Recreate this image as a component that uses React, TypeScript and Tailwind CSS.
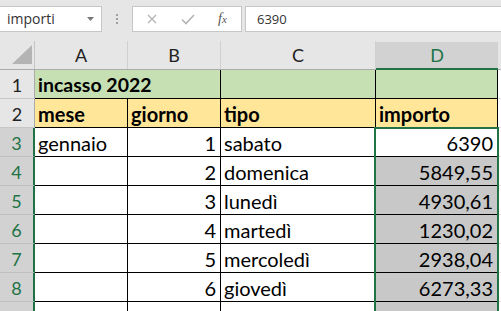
import React from "react";

type Row = { n: number; a?: string; b?: string; c?: string; d?: string; kind: "title" | "head" | "data" };

const rows: Row[] = [
  { n: 1, a: "incasso 2022", kind: "title" },
  { n: 2, a: "mese", b: "giorno", c: "tipo", d: "importo", kind: "head" },
  { n: 3, a: "gennaio", b: "1", c: "sabato", d: "6390", kind: "data" },
  { n: 4, b: "2", c: "domenica", d: "5849,55", kind: "data" },
  { n: 5, b: "3", c: "lunedì", d: "4930,61", kind: "data" },
  { n: 6, b: "4", c: "martedì", d: "1230,02", kind: "data" },
  { n: 7, b: "5", c: "mercoledì", d: "2938,04", kind: "data" },
  { n: 8, b: "6", c: "giovedì", d: "6273,33", kind: "data" },
  { n: 9, b: "7", c: "venerdì", d: "", kind: "data" },
];

const cellFont = { fontFamily: "Lato, 'Open Sans', sans-serif" };

export default function App() {
  return (
    <div className="w-[501px] h-[311px] overflow-hidden bg-white relative" style={{ fontFamily: "'Open Sans', sans-serif" }}>
      {/* toolbar */}
      <div className="h-[41px] bg-[#e6e6e6] flex items-start pt-[6px]">
        <div className="w-[102px] h-[26px] bg-white border border-l-0 border-[#c6c6c6] flex items-center justify-between pl-[7px] pr-[7px]">
          <span className="text-[14px] text-[#333] leading-none">importi</span>
          <svg width="7" height="4" viewBox="0 0 7 4"><path d="M0 0h7L3.5 4z" fill="#777" /></svg>
        </div>
        <div className="w-[30px] h-[26px] flex flex-col items-center justify-center gap-[2px]">
          <span className="w-[2px] h-[2px] bg-[#a0a0a0]" />
          <span className="w-[2px] h-[2px] bg-[#a0a0a0]" />
          <span className="w-[2px] h-[2px] bg-[#a0a0a0]" />
        </div>
        <div className="w-[110px] h-[26px] bg-white border border-[#c6c6c6] flex items-center">
          <svg className="ml-[14px]" width="10" height="10" viewBox="0 0 10 10">
            <path d="M1 1L9 9M9 1L1 9" stroke="#b4b4b4" strokeWidth="1.3" />
          </svg>
          <svg className="ml-[24px]" width="14" height="11" viewBox="0 0 14 11">
            <path d="M1 5.5L5 9.5L13 1" stroke="#b4b4b4" strokeWidth="1.6" fill="none" />
          </svg>
          <span className="ml-[23px] text-[14px] italic text-[#555] leading-none" style={{ fontFamily: "'Liberation Serif', serif" }}>
            f<span className="text-[11px]">x</span>
          </span>
        </div>
        <div className="ml-[3px] flex-1 h-[26px] bg-white border border-r-0 border-[#c6c6c6] flex items-center pl-[11px]">
          <span className="text-[13px] text-[#333] leading-none">6390</span>
        </div>
      </div>

      {/* column header */}
      <div className="flex h-[29px] bg-[#e6e6e6] border-b border-[#ababab] text-[18px] text-[#222]" style={cellFont}>
        <div className="w-[35px] shrink-0 border-r border-[#c6c6c6] relative">
          <svg className="absolute left-[12px] top-[4px]" width="20" height="19" viewBox="0 0 20 19">
            <path d="M20 0V19H0z" fill="#b4b4b4" />
          </svg>
        </div>
        <div className="w-[93px] shrink-0 border-r border-[#d0d0d0] flex items-center justify-center">A</div>
        <div className="w-[93px] shrink-0 border-r border-[#d0d0d0] flex items-center justify-center">B</div>
        <div className="w-[155px] shrink-0 border-r border-[#d0d0d0] flex items-center justify-center">C</div>
        <div className="w-[122px] shrink-0 mt-[1px] -mb-[1px] bg-[#d2d2d2] border-b-2 border-[#217346] flex items-center justify-center text-[#217346]">D</div>
        <div className="flex-1" />
      </div>

      {/* rows */}
      <div className="relative" style={cellFont}>
        {rows.map((r) => {
          const sel = r.n >= 3;
          const fill = r.kind === "title" ? "bg-[#c6e0b4]" : r.kind === "head" ? "bg-[#ffe699]" : "bg-white";
          const bold = r.kind !== "data" ? "font-bold" : "";
          return (
            <div key={r.n} className="flex h-[29px] text-[20px] text-black leading-none">
              <div
                className={
                  "w-[35px] shrink-0 flex items-center justify-center text-[18px] pt-[1px] " +
                  (sel
                    ? "bg-[#d2d2d2] text-[#217346] border-r-2 border-r-[#217346] border-b border-b-[#bfbfbf]"
                    : "bg-[#e6e6e6] text-[#222] border-r border-r-[#ababab] border-b border-b-[#c6c6c6]")
                }
              >
                {r.n}
              </div>
              {r.kind === "title" ? (
                <div className={`w-[186px] shrink-0 border-r border-b border-black ${fill} ${bold} text-[19.5px] flex items-center pl-[3px] pt-[1px]`}>
                  {r.a}
                </div>
              ) : (
                <>
                  <div className={`w-[93px] shrink-0 border-r border-b border-black ${fill} ${bold} flex items-center pl-[3px] pt-[1px]`}>{r.a}</div>
                  <div className={`w-[93px] shrink-0 border-r border-b border-black ${fill} ${bold} flex items-center pt-[1px] ${r.kind === "data" ? "justify-end pr-[4px]" : "pl-[3px]"}`}>{r.b}</div>
                </>
              )}
              <div className={`w-[155px] shrink-0 border-r border-b border-black ${fill} ${bold} flex items-center pl-[3px] pt-[1px]`}>{r.c}</div>
              <div
                className={`w-[122px] shrink-0 border-r border-b border-black ${
                  r.kind === "data" ? (r.n === 3 ? "bg-white" : "bg-[#c8c8c8]") : fill
                } ${bold} flex items-center pt-[1px] ${r.kind === "data" ? "justify-end pr-[4px]" : "pl-[3px]"}`}
              >
                {r.d}
              </div>
              <div className="flex-1 border-b border-[#e1e1e1]" />
            </div>
          );
        })}
        {/* selection outline D3:D9 */}
        <div className="absolute left-[374px] top-[57px] w-[125px] h-[300px] border-2 border-[#217346] pointer-events-none" />
      </div>
    </div>
  );
}
